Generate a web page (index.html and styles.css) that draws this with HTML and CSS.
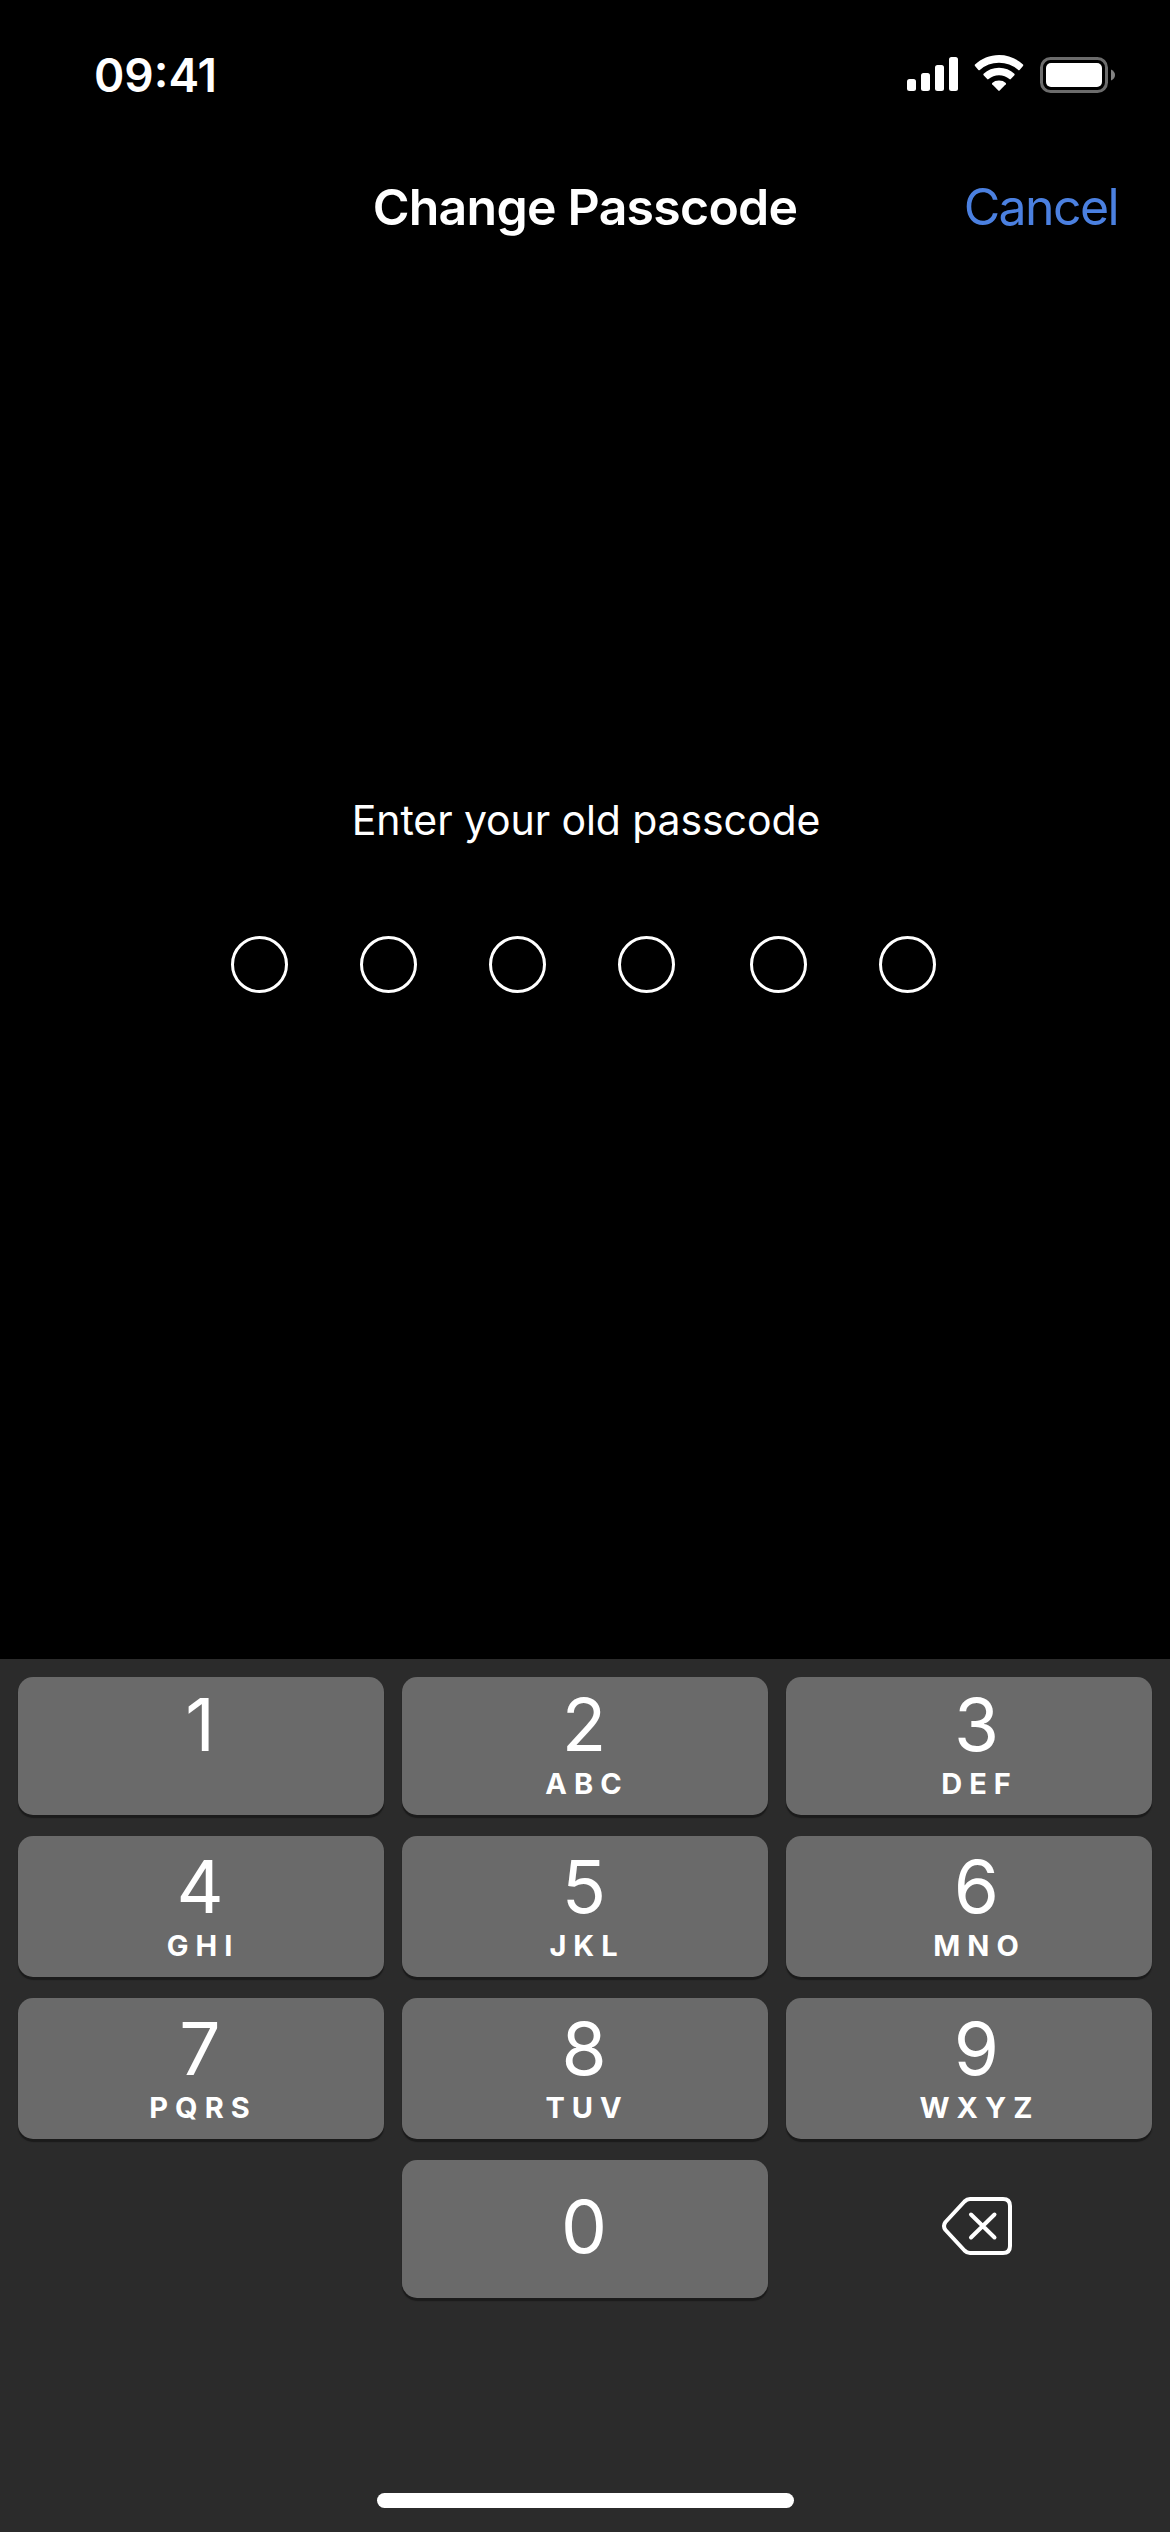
FILE: index.html
```html
<!DOCTYPE html>
<html lang="en">
<head>
<meta charset="utf-8">
<title>Change Passcode</title>
<link rel="stylesheet" href="styles.css">
</head>
<body>
<main class="screen">
  <header class="status">
    <span class="time">09:41</span>
    <svg class="status-icons" width="210" height="40" viewBox="0 0 210 40">
      <g fill="#fff">
        <rect x="2" y="24" width="9" height="12" rx="2.5"/>
        <rect x="16" y="18" width="9" height="18" rx="2.5"/>
        <rect x="30" y="10" width="9" height="26" rx="2.5"/>
        <rect x="44" y="2" width="9" height="34" rx="2.5"/>
        <path d="M94 0C103.200 0 111.700 3.500 118 9.600Q118.600 10.300 118 11L114.600 14.900Q113.900 15.600 113.200 15Q105 7.800 94 7.800T74.800 15Q74.100 15.600 73.400 14.900L70 11Q69.400 10.300 70 9.600C76.300 3.500 84.800 0 94 0Z"/>
        <path d="M94 12.800C100 12.800 105.300 15 109.400 18.800Q110 19.500 109.400 20.200L105.800 24.100Q105.100 24.700 104.400 24.100Q100 20.300 94 20.300T83.600 24.100Q82.900 24.700 82.200 24.100L78.600 20.200Q78 19.500 78.600 18.800C82.700 15 88 12.800 94 12.800Z"/>
        <path d="M94 25.600Q98.200 25.600 100.800 28Q101.300 28.600 100.800 29.200L94.700 35.600Q94 36.200 93.300 35.600L87.200 29.200Q86.700 28.600 87.200 28Q89.800 25.600 94 25.600Z"/>
        <rect x="141" y="8" width="56" height="24" rx="5"/>
      </g>
      <rect x="136.500" y="3.500" width="65" height="33" rx="9" fill="none" stroke="#6c6c6c" stroke-width="3"/>
      <path d="M206 14.500Q210 16.500 210 20T206 25.500Z" fill="#838383"/>
    </svg>
  </header>
  <nav class="nav">
    <h1 class="title">Change Passcode</h1>
    <a class="cancel">Cancel</a>
  </nav>
  <section class="entry">
    <p class="prompt">Enter your old passcode</p>
    <div class="dots"><i class="dot"></i><i class="dot"></i><i class="dot"></i><i class="dot"></i><i class="dot"></i><i class="dot"></i></div>
  </section>
  <section class="keyboard">
    <div class="keys">
      <div class="key first"><span class="digit">1</span></div>
      <div class="key first"><span class="digit">2</span><span class="letters">ABC</span></div>
      <div class="key first right"><span class="digit">3</span><span class="letters">DEF</span></div>
      <div class="key"><span class="digit">4</span><span class="letters">GHI</span></div>
      <div class="key"><span class="digit">5</span><span class="letters">JKL</span></div>
      <div class="key right"><span class="digit">6</span><span class="letters">MNO</span></div>
      <div class="key"><span class="digit">7</span><span class="letters">PQRS</span></div>
      <div class="key"><span class="digit">8</span><span class="letters">TUV</span></div>
      <div class="key right"><span class="digit">9</span><span class="letters">WXYZ</span></div>
      <div class="key zero"><span class="digit">0</span></div>
      <div class="delete">
        <svg width="72" height="60" viewBox="0 0 72 60" fill="none" stroke="#fff" stroke-width="4" stroke-linecap="round" stroke-linejoin="round">
          <path d="M29 3H62Q69 3 69 10V50Q69 57 62 57H29Q26 57 23.500 54.500L4.500 34Q1.500 30 4.500 26L23.500 5.500Q26 3 29 3Z"/>
          <path d="M30 18.500L53.500 41.500M53.500 18.500L30 41.500"/>
        </svg>
      </div>
    </div>
    <div class="home"></div>
  </section>
</main>
</body>
</html>
```
FILE: styles.css
```css
* { box-sizing: border-box; }
body { margin: 0; background: #000; }
.screen {
  width: 1170px;
  height: 2532px;
  display: flex;
  flex-direction: column;
  background: #000;
  color: #fff;
  font-family: Inter, "Liberation Sans", sans-serif;
}
.status {
  height: 149px;
  padding: 0 55px 0 94px;
  display: flex;
  align-items: center;
  justify-content: space-between;
}
.time { font-size: 46px; font-weight: 600; line-height: 60px; }
.status-icons { display: block; }
.nav {
  height: 116px;
  padding: 0 52px;
  display: grid;
  grid-template-columns: 1fr auto 1fr;
  align-items: center;
}
.title {
  grid-column: 2;
  margin: 0;
  font-size: 50px;
  font-weight: 600;
  line-height: 60px;
  letter-spacing: -0.75px;
}
.cancel {
  justify-self: end;
  color: #4b80e0;
  font-size: 50px;
  line-height: 60px;
  letter-spacing: -1.6px;
}
.entry {
  padding-top: 530px;
  display: flex;
  flex-direction: column;
  align-items: center;
}
.prompt {
  margin: 0;
  padding-left: 2px;
  font-size: 41px;
  line-height: 50px;
  letter-spacing: -0.1px;
  white-space: nowrap;
}
.dots { margin-top: 91px; padding-right: 3px; display: flex; gap: 72px; }
.dot { width: 57px; height: 57px; border: 3px solid #fff; border-radius: 50%; }
.dot:nth-child(5) { margin-left: 3px; }
.keyboard {
  height: 873px;
  margin-top: auto;
  padding: 18px 18px 24px;
  display: flex;
  flex-direction: column;
  justify-content: space-between;
  align-items: center;
  background: #2b2b2b;
}
.keys {
  width: 100%;
  display: grid;
  grid-template-columns: repeat(3, 1fr);
  grid-template-rows: 138px 141px 141px 138px;
  gap: 21px 18px;
}
.key {
  padding: 21px 2px 0 0;
  display: flex;
  flex-direction: column;
  align-items: center;
  background: #6a6a6a;
  border-radius: 15px;
  box-shadow: 0 3px 1px #1b1b1b;
}
.first { padding-top: 18px; }
.right { padding: 21px 0 0 15px; }
.first.right { padding-top: 18px; }
.zero { grid-column: 2; padding-top: 37px; }
.digit { font-size: 73px; line-height: 60px; }
.letters {
  margin-top: 14px;
  padding-left: 6px;
  font-size: 29px;
  font-weight: 700;
  line-height: 30px;
  letter-spacing: 7px;
}
.delete { display: flex; align-items: center; justify-content: center; padding-left: 15px; padding-bottom: 6px; }
.home { width: 417px; height: 15px; border-radius: 8px; background: #fff; }
```
